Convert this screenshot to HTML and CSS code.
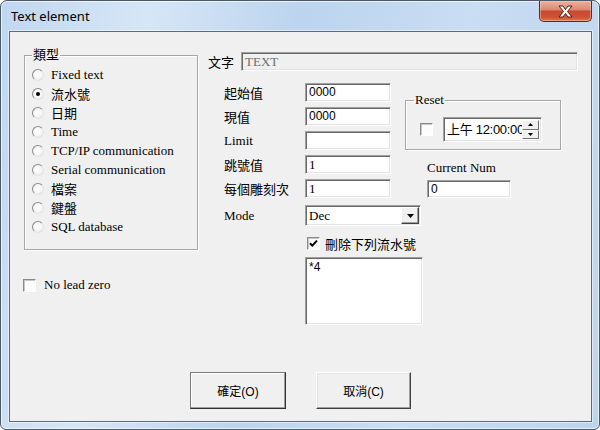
FILE: index.html
```html
<!DOCTYPE html>
<html>
<head>
<meta charset="utf-8">
<link rel="stylesheet" href="styles.css">
</head>
<body>
<div class="window">
  <div class="titlebar">
    <span class="title">Text element</span>
    <div class="close">
      <svg width="17" height="13" viewBox="0 0 17 13"><path d="M2 1H6L8.5 4.5L11 1H15L10.5 6.5L15 12H11L8.5 8.5L6 12H2L6.5 6.5Z" fill="#fff" stroke="#5a1a10" stroke-width="1" stroke-linejoin="round"/></svg>
    </div>
  </div>
  <div class="client">
    <div class="main">
      <div class="left">
        <fieldset class="group type-group">
          <legend>類型</legend>
          <div class="radio-row"><span class="radio"></span><span>Fixed text</span></div>
          <div class="radio-row"><span class="radio on"></span><span>流水號</span></div>
          <div class="radio-row"><span class="radio"></span><span>日期</span></div>
          <div class="radio-row"><span class="radio"></span><span>Time</span></div>
          <div class="radio-row"><span class="radio"></span><span>TCP/IP communication</span></div>
          <div class="radio-row"><span class="radio"></span><span>Serial communication</span></div>
          <div class="radio-row"><span class="radio"></span><span>檔案</span></div>
          <div class="radio-row"><span class="radio"></span><span>鍵盤</span></div>
          <div class="radio-row"><span class="radio"></span><span>SQL database</span></div>
        </fieldset>
        <div class="check-row lead"><span class="check"></span><span>No lead zero</span></div>
      </div>
      <div class="right">
        <div class="text-row">
          <span class="lbl-text">文字</span>
          <div class="field disabled">TEXT</div>
        </div>
        <div class="params">
          <div class="grid">
            <span class="lbl">起始值</span><div class="field sans">0000</div>
            <span class="lbl">現值</span><div class="field sans">0000</div>
            <span class="lbl">Limit</span><div class="field sans"></div>
            <span class="lbl">跳號值</span><div class="field">1</div>
            <span class="lbl">每個雕刻次</span><div class="field">1</div>
          </div>
          <div class="side">
            <fieldset class="group reset">
              <legend>Reset</legend>
              <div class="reset-row">
                <span class="check"></span>
                <div class="picker">
                  <span class="picker-text">上午 12:00:00</span>
                  <div class="spin">
                    <div class="spin-btn"><svg width="5" height="3" viewBox="0 0 5 3"><path d="M0 3H5L2.5 0Z" fill="#000"/></svg></div>
                    <div class="spin-btn"><svg width="5" height="3" viewBox="0 0 5 3"><path d="M0 0H5L2.5 3Z" fill="#000"/></svg></div>
                  </div>
                </div>
              </div>
            </fieldset>
            <div class="cur-label">Current Num</div>
            <div class="field sans cur">0</div>
          </div>
        </div>
        <div class="mode-row">
          <span class="lbl">Mode</span>
          <div class="select">
            <span class="select-text">Dec</span>
            <div class="drop"><svg width="7" height="4" viewBox="0 0 7 4"><path d="M0 0H7L3.5 4Z" fill="#000"/></svg></div>
          </div>
        </div>
        <div class="check-row del">
          <span class="check"><svg width="11" height="11" viewBox="0 0 11 11"><path d="M2 5.2L4.3 7.6L9 2.6" fill="none" stroke="#000" stroke-width="2"/></svg></span>
          <span>刪除下列流水號</span>
        </div>
        <div class="listbox">*4</div>
      </div>
    </div>
    <div class="buttons">
      <div class="btn default">確定(O)</div>
      <div class="btn second">取消(C)</div>
    </div>
  </div>
</div>
</body>
</html>
```

FILE: styles.css
```css
html, body {
  margin: 0;
  padding: 0;
  background: #ffffff;
}
.window {
  width: 600px;
  height: 430px;
  box-sizing: border-box;
  border: 1px solid #4b5866;
  border-radius: 7px 7px 6px 6px;
  background: linear-gradient(100deg, #c0d7f0 0%, #d6e6f7 22%, #bcd4ee 45%, #c9ddf3 70%, #bcd5ef 100%);
  box-shadow: inset 0 0 0 1px rgba(255,255,255,0.65);
  display: flex;
  flex-direction: column;
  overflow: hidden;
}
.titlebar {
  height: 30px;
  display: flex;
  justify-content: space-between;
  align-items: flex-start;
  flex: none;
}
.title {
  padding-left: 10px;
  line-height: 30px;
  font-family: "Noto Sans", "Open Sans", sans-serif;
  font-size: 13px;
  color: #000;
}
.close {
  width: 53px;
  height: 21px;
  margin-right: 7px;
  box-sizing: border-box;
  border: 1px solid #6e2418;
  border-top: none;
  border-radius: 0 0 5px 5px;
  background: linear-gradient(#eab0a2 0%, #df8a74 42%, #c74a31 52%, #cc5236 80%, #d9765a 100%);
  box-shadow: inset 0 0 0 1px rgba(255,210,195,0.45);
  display: flex;
  align-items: center;
  justify-content: center;
}
.client {
  flex: 1;
  margin: 0 7px 7px 8px;
  border: 1px solid #5e6a78;
  background: #f0f0f0;
  display: flex;
  flex-direction: column;
  font-family: "Liberation Serif", "Noto Sans CJK TC", serif;
  font-size: 13px;
  color: #000;
  box-shadow: 0 0 0 1px rgba(255,255,255,0.5);
}
.main {
  display: flex;
}
.left {
  margin-left: 14px;
  padding-top: 16px;
  width: 174px;
}
fieldset.group {
  margin: 0;
  box-sizing: border-box;
  border: 1px solid #a6a6a6;
  box-shadow: inset 1px 1px 0 #fff, 1px 1px 0 #fff;
  min-width: 0;
}
fieldset.group legend {
  padding: 0 1px;
  line-height: 14px;
  height: 14px;
}
.type-group {
  width: 174px;
  padding: 3px 0 13px 7px;
}
.radio-row {
  height: 19px;
  display: flex;
  align-items: center;
  white-space: nowrap;
}
.radio {
  width: 12px;
  height: 12px;
  box-sizing: border-box;
  border-radius: 50%;
  border: 1px solid;
  border-color: #8a8a8a #e4e4e4 #e4e4e4 #8a8a8a;
  background: radial-gradient(circle at 40% 40%, #ffffff 0%, #f4f4f4 60%, #dcdcdc 100%);
  margin-right: 7px;
  flex: none;
  display: flex;
  align-items: center;
  justify-content: center;
}
.radio.on::after {
  content: "";
  width: 4px;
  height: 4px;
  border-radius: 50%;
  background: #000;
}
.check-row {
  height: 14px;
  display: flex;
  align-items: center;
  white-space: nowrap;
}
.check {
  width: 13px;
  height: 13px;
  box-sizing: border-box;
  border: 1px solid;
  border-color: #8a8a8a #ffffff #ffffff #8a8a8a;
  box-shadow: inset 1px 1px 0 #c8c8c8;
  background: #fdfdfd;
  flex: none;
  display: flex;
  align-items: center;
  justify-content: center;
}
.lead {
  margin-top: 28px;
  margin-left: -1px;
}
.lead .check {
  margin-right: 8px;
}
.right {
  margin-left: 10px;
  padding-top: 20px;
}
.text-row {
  display: flex;
  align-items: center;
  height: 19px;
}
.lbl-text {
  width: 33px;
  flex: none;
}
.field {
  height: 19px;
  box-sizing: border-box;
  border: 1px solid;
  border-color: #a0a0a0 #ffffff #ffffff #a0a0a0;
  box-shadow: inset 1px 1px 0 #696969, inset -1px -1px 0 #e3e3e3;
  background: #fff;
  padding: 0 3px;
  line-height: 17px;
  font-size: 13px;
  white-space: nowrap;
  overflow: hidden;
}
.field.sans {
  font-family: "Liberation Sans", "Noto Sans CJK TC", sans-serif;
  font-size: 12px;
}
.disabled {
  width: 337px;
  background: #f0f0f0;
  color: #6d6d6d;
}
.params {
  display: flex;
  margin-top: 12px;
}
.grid {
  display: grid;
  grid-template-columns: 81px 86px;
  grid-auto-rows: 19px;
  row-gap: 5px;
  align-items: center;
  margin-left: 16px;
}
.lbl {
  white-space: nowrap;
}
.side {
  margin-left: 14px;
}
.reset {
  width: 156px;
  margin-top: 10px !important;
  padding: 10px 0 7px 14px;
}
.reset legend {
  margin-left: -6px;
}
.reset-row {
  display: flex;
  align-items: center;
}
.reset-row .check {
  margin-right: 10px;
}
.picker {
  width: 99px;
  height: 25px;
  box-sizing: border-box;
  border: 1px solid;
  border-color: #a0a0a0 #ffffff #ffffff #a0a0a0;
  box-shadow: inset 1px 1px 0 #696969, inset -1px -1px 0 #e3e3e3;
  background: #fff;
  display: flex;
  align-items: center;
  padding: 2px 2px 2px 3px;
}
.picker-text {
  flex: 1;
  overflow: hidden;
  white-space: nowrap;
  font-family: "Liberation Sans", "Noto Sans CJK TC", sans-serif;
  font-size: 13px;
  letter-spacing: -0.3px;
  line-height: 19px;
}
.spin {
  width: 17px;
  height: 19px;
  display: flex;
  flex-direction: column;
  flex: none;
}
.spin-btn {
  flex: 1;
  box-sizing: border-box;
  background: #f0f0f0;
  border: 1px solid;
  border-color: #ffffff #707070 #707070 #ffffff;
  display: flex;
  align-items: center;
  justify-content: center;
}
.cur-label {
  margin-top: 11px;
  margin-left: 22px;
  line-height: 14px;
  white-space: nowrap;
}
.cur {
  margin-top: 5px;
  margin-left: 22px;
  width: 84px;
  height: 18px;
  line-height: 16px;
}
.mode-row {
  display: flex;
  align-items: center;
  margin-top: 7px;
  margin-left: 16px;
  height: 21px;
}
.mode-row .lbl {
  width: 81px;
}
.select {
  width: 116px;
  height: 21px;
  box-sizing: border-box;
  border: 1px solid;
  border-color: #a0a0a0 #ffffff #ffffff #a0a0a0;
  box-shadow: inset 1px 1px 0 #696969, inset -1px -1px 0 #e3e3e3;
  background: #fff;
  display: flex;
  align-items: center;
  padding: 1px 1px 1px 0;
}
.select-text {
  flex: 1;
  padding-left: 3px;
}
.drop {
  width: 18px;
  height: 17px;
  box-sizing: border-box;
  background: #f0f0f0;
  border: 1px solid;
  border-color: #ffffff #404040 #404040 #ffffff;
  box-shadow: inset -1px -1px 0 #a0a0a0;
  display: flex;
  align-items: center;
  justify-content: center;
}
.del {
  margin-top: 10px;
  margin-left: 99px;
}
.del .check {
  margin-right: 5px;
}
.listbox {
  margin-top: 7px;
  margin-left: 97px;
  width: 118px;
  height: 68px;
  box-sizing: border-box;
  border: 1px solid;
  border-color: #a0a0a0 #ffffff #ffffff #a0a0a0;
  box-shadow: inset 1px 1px 0 #696969, inset -1px -1px 0 #e3e3e3;
  background: #fff;
  padding: 2px 3px;
  font-family: "Liberation Sans", "Noto Sans CJK TC", sans-serif;
  font-size: 12px;
  line-height: 14px;
}
.buttons {
  display: flex;
  gap: 30px;
  margin-top: 47px;
  padding-left: 180px;
}
.btn {
  width: 96px;
  height: 37px;
  box-sizing: border-box;
  background: #f0f0f0;
  border: 1px solid;
  border-color: #ffffff #404040 #404040 #ffffff;
  box-shadow: inset -1px -1px 0 #a0a0a0, inset 1px 1px 0 #e3e3e3;
  display: flex;
  align-items: center;
  justify-content: center;
  font-family: "Liberation Sans", "Noto Sans CJK TC", sans-serif;
  font-size: 12px;
}
.btn.default {
  border-color: #7a7a7a #303030 #303030 #7a7a7a;
  box-shadow: inset -1px -1px 0 #a0a0a0, inset 1px 1px 0 #ffffff;
}
.btn.second {
  width: 95px;
}
```
